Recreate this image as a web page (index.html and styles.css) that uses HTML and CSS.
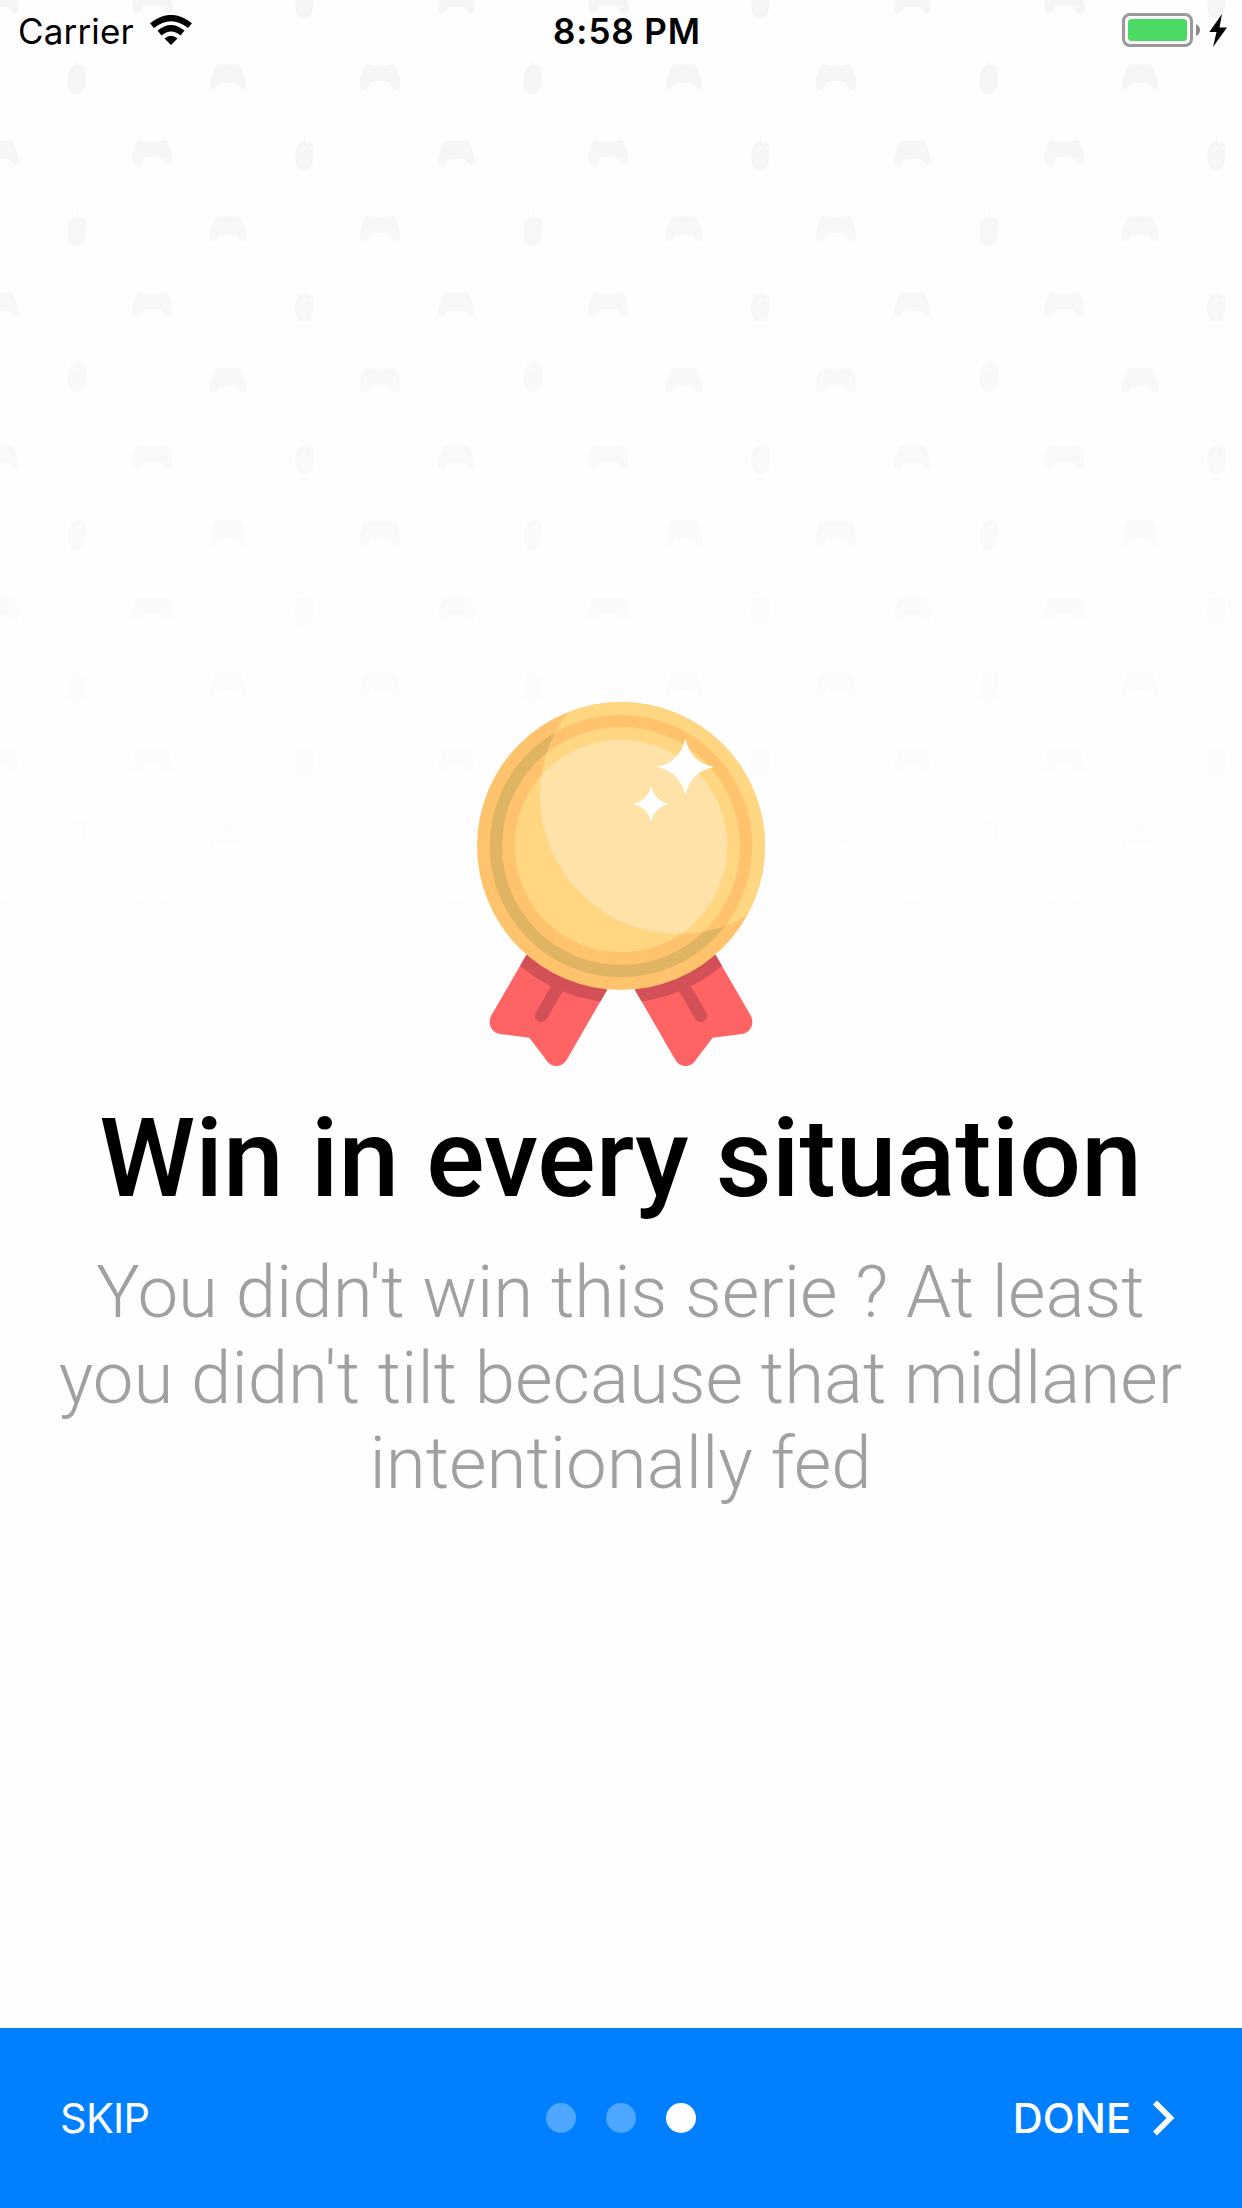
FILE: index.html
```html
<!DOCTYPE html>
<html lang="en">
<head>
<meta charset="utf-8">
<title>Win in every situation</title>
<link rel="stylesheet" href="styles.css">
</head>
<body>
<div class="screen">
  <svg class="backdrop" viewBox="0 0 1242 1000" aria-hidden="true">
    <defs>
      <path id="pad-a" d="M-10-12.5Q-12-12.500-13.500-9.500Q-18.500 2-18.500 9Q-17.500 12.500-14.500 12.200Q-12.500 12-11 9.500Q-8.500 6-6.500 5.700H6.500Q8.500 6 11 9.500Q12.500 12 14.500 12.200Q17.500 12.500 18.500 9Q18.500 2 13.500-9.500Q12-12.500 10-12.500Z"/>
      <path id="pad-b" d="M-12-12.500Q-16-13-17-8.500Q-20.500 2-20.200 9Q-19.500 12-16 12Q-12 12-10.500 8Q-10 5-7.500 4.500Q0 3 7.500 4.500Q10 5 10.500 8Q12 12 16 12Q19.500 12 20.200 9Q20.500 2 17-8.500Q16-13 12-12.500L8-11.500H-8Z"/>
      <g id="mouse">
        <path d="M-.5-17h2v7h-2z" opacity=".6"/>
        <path fill-rule="evenodd" d="M-4-11.500H5Q9-10 9-6V4Q8.500 17 0 17Q-9.500 17-9.500 4Q-9.500-8-4-11.500ZM.5-7Q-.5-7-.5-5.500T.5-4Q1.500-4 1.500-5.500T.5-7Z"/>
      </g>
      <pattern id="gear" patternUnits="userSpaceOnUse" x="-30" y="-30" width="456" height="456">
        <g fill="#f5f5f5" transform="translate(30 30)">
          <use href="#pad-a" x=".5" y="1"/><use href="#pad-b" x="152.500" y="1"/><use href="#mouse" x="304.500" y="1"/>
          <use href="#mouse" x="77" y="77"/><use href="#pad-a" x="228" y="77"/><use href="#pad-b" x="380" y="77"/>
          <use href="#pad-a" x=".5" y="153"/><use href="#pad-b" x="152.500" y="153"/><use href="#mouse" x="304.500" y="153"/>
          <use href="#mouse" x="77" y="229"/><use href="#pad-a" x="228" y="229"/><use href="#pad-b" x="380" y="229"/>
          <use href="#pad-a" x=".5" y="305"/><use href="#pad-b" x="152.500" y="305"/><use href="#mouse" x="304.500" y="305"/>
          <use href="#mouse" x="77" y="375"/><use href="#pad-a" x="228" y="380.500"/><use href="#pad-b" x="380" y="380.500"/>
        </g>
      </pattern>
      <linearGradient id="fade" x1="0" y1="0" x2="0" y2="1">
        <stop offset="0" stop-color="#fefefe" stop-opacity="0"/>
        <stop offset="1" stop-color="#fefefe"/>
      </linearGradient>
    </defs>
    <rect width="1242" height="1000" fill="url(#gear)"/>
    <rect width="1242" height="1000" fill="url(#fade)"/>
  </svg>

  <header class="status">
    <div class="status-side">
      <span class="carrier">Carrier</span>
      <svg class="wifi" viewBox="0 0 42 30">
        <path d="M21 30L14.500 23.500Q21 18 27.500 23.500Z"/>
        <path d="M9.500 18Q21 8.500 32.500 18M2 10.700Q21-4.500 40 10.700" fill="none" stroke="#000" stroke-width="6.200"/>
      </svg>
    </div>
    <span class="time">8:58 PM</span>
    <div class="status-side status-end">
      <svg class="battery" viewBox="0 0 105 34">
        <rect x="1.500" y="1.500" width="68" height="31" rx="6.500" fill="#fefefe" stroke="#999" stroke-width="3"/>
        <rect x="6" y="6" width="59" height="22" rx="3.500" fill="#4cd964"/>
        <path d="M74 11q4 2 4 6t-4 6z" fill="#8c8c8c"/>
        <path d="M100 1L87.300 19H94.500L91 34L105 14.500H97.500Z"/>
      </svg>
    </div>
  </header>

  <main class="slide">
    <svg class="medal" viewBox="0 0 960 1170" role="img" aria-label="Gold medal">
      <defs>
        <path id="ribbon" d="M199 795L93 978C82 1002 94 1028 120 1032L208 1043L256 1106C273 1135 306 1135 322 1106L441 900L360 780Z"/>
        <clipPath id="ribbon-clip"><use href="#ribbon"/></clipPath>
        <clipPath id="shine"><circle cx="654" cy="318" r="414"/></clipPath>
        <g id="tail">
          <use href="#ribbon" fill="#ff6464"/>
          <circle cx="483" cy="468" r="470" fill="#d25056" clip-path="url(#ribbon-clip)"/>
          <path d="M300 880L244 977" stroke="#d25056" stroke-width="38" stroke-linecap="round"/>
        </g>
      </defs>
      <use href="#tail"/>
      <use href="#tail" transform="translate(966 0) scale(-1 1)"/>
      <circle cx="483" cy="468" r="432" fill="#ffc36e"/>
      <circle cx="483" cy="468" r="394" fill="#dfb462"/>
      <circle cx="483" cy="468" r="357" fill="#ffc36e"/>
      <circle cx="483" cy="468" r="319" fill="#ffd782"/>
      <g clip-path="url(#shine)">
        <circle cx="483" cy="468" r="432" fill="#ffd782"/>
        <circle cx="483" cy="468" r="394" fill="#ffc36e"/>
        <circle cx="483" cy="468" r="357" fill="#ffd782"/>
        <circle cx="483" cy="468" r="319" fill="#ffe2a8"/>
      </g>
      <g fill="#fff" stroke="#fff" stroke-width="3" stroke-linejoin="round">
        <path d="M676 150C686 193 714 222 757 231C714 240 686 269 676 312C666 269 638 240 595 231C638 222 666 193 676 150Z"/>
        <path d="M573 292C580 318 597 336 623 342C597 348 580 366 573 392C566 366 549 348 523 342C549 336 566 318 573 292Z"/>
      </g>
    </svg>
    <h1 class="title">Win in every situation</h1>
    <p class="text">You didn't win this serie ? At least<br>you didn't tilt because that midlaner<br>intentionally fed</p>
  </main>

  <footer class="bar">
    <span class="skip">SKIP</span>
    <div class="dots"><i class="dot"></i><i class="dot"></i><i class="dot dot-on"></i></div>
    <div class="done">
      <span>DONE</span>
      <svg class="chevron" viewBox="0 0 22 36"><path d="M2 2.500L17.500 18L2 33.500" fill="none" stroke="#fff" stroke-width="5.600"/></svg>
    </div>
  </footer>
</div>
</body>
</html>
```
FILE: styles.css
```css
* { box-sizing: border-box; }

body {
  margin: 0;
  background: #fefefe;
}

.screen {
  position: relative;
  display: flex;
  flex-direction: column;
  width: 1242px;
  height: 2208px;
  overflow: hidden;
}

/* decorative pattern behind the content */
.backdrop {
  position: absolute;
  top: 0;
  left: 0;
  width: 1242px;
  height: 1000px;
}

.status,
.slide,
.bar { position: relative; }

.status {
  display: grid;
  grid-template-columns: 1fr auto 1fr;
  align-items: center;
  height: 60px;
  padding: 0 15px 0 18px;
  font: 400 35px/58px Inter, "Liberation Sans", sans-serif;
}

.status-side {
  display: flex;
  align-items: center;
  gap: 16px;
}

.status-end { justify-content: flex-end; }

.carrier {
  padding-top: 2px;
  letter-spacing: 0.15px;
}

.wifi { width: 42px; height: 30px; }

.time {
  padding: 2px 0 0 9px;
  font-weight: 600;
  letter-spacing: 0.9px;
}

.battery { width: 105px; height: 34px; }

.slide {
  flex: 1;
  display: flex;
  flex-direction: column;
  align-items: center;
  padding-top: 630px;
  text-align: center;
  font-family: Roboto, "Liberation Sans", sans-serif;
}

.medal {
  width: 320px;
  height: 390px;
  margin-right: 2px;
}

.title {
  margin: 14px 1px 0 0;
  font-size: 109px;
  font-weight: 500;
  line-height: 130px;
  white-space: nowrap;
}

.text {
  margin: 26px 1px 0 0;
  color: #a0a0a0;
  font-size: 72.6px;
  font-weight: 300;
  line-height: 85.5px;
  white-space: nowrap;
}

.bar {
  display: grid;
  grid-template-columns: 1fr auto 1fr;
  align-items: center;
  height: 180px;
  padding: 0 67px 0 60px;
  background: #0080ff;
  color: #fff;
  font: 400 41.5px/50px Inter, "Liberation Sans", sans-serif;
}

.skip { letter-spacing: -0.7px; }

.dots {
  display: flex;
  gap: 30px;
  padding-left: 7px;
}

.dot {
  width: 30px;
  height: 30px;
  border-radius: 50%;
  background: #4da6ff;
}

.dot-on { background: #fff; }

.done {
  display: flex;
  align-items: center;
  justify-content: flex-end;
  gap: 22px;
  font-weight: 500;
}

.chevron { width: 22px; height: 36px; }
```
